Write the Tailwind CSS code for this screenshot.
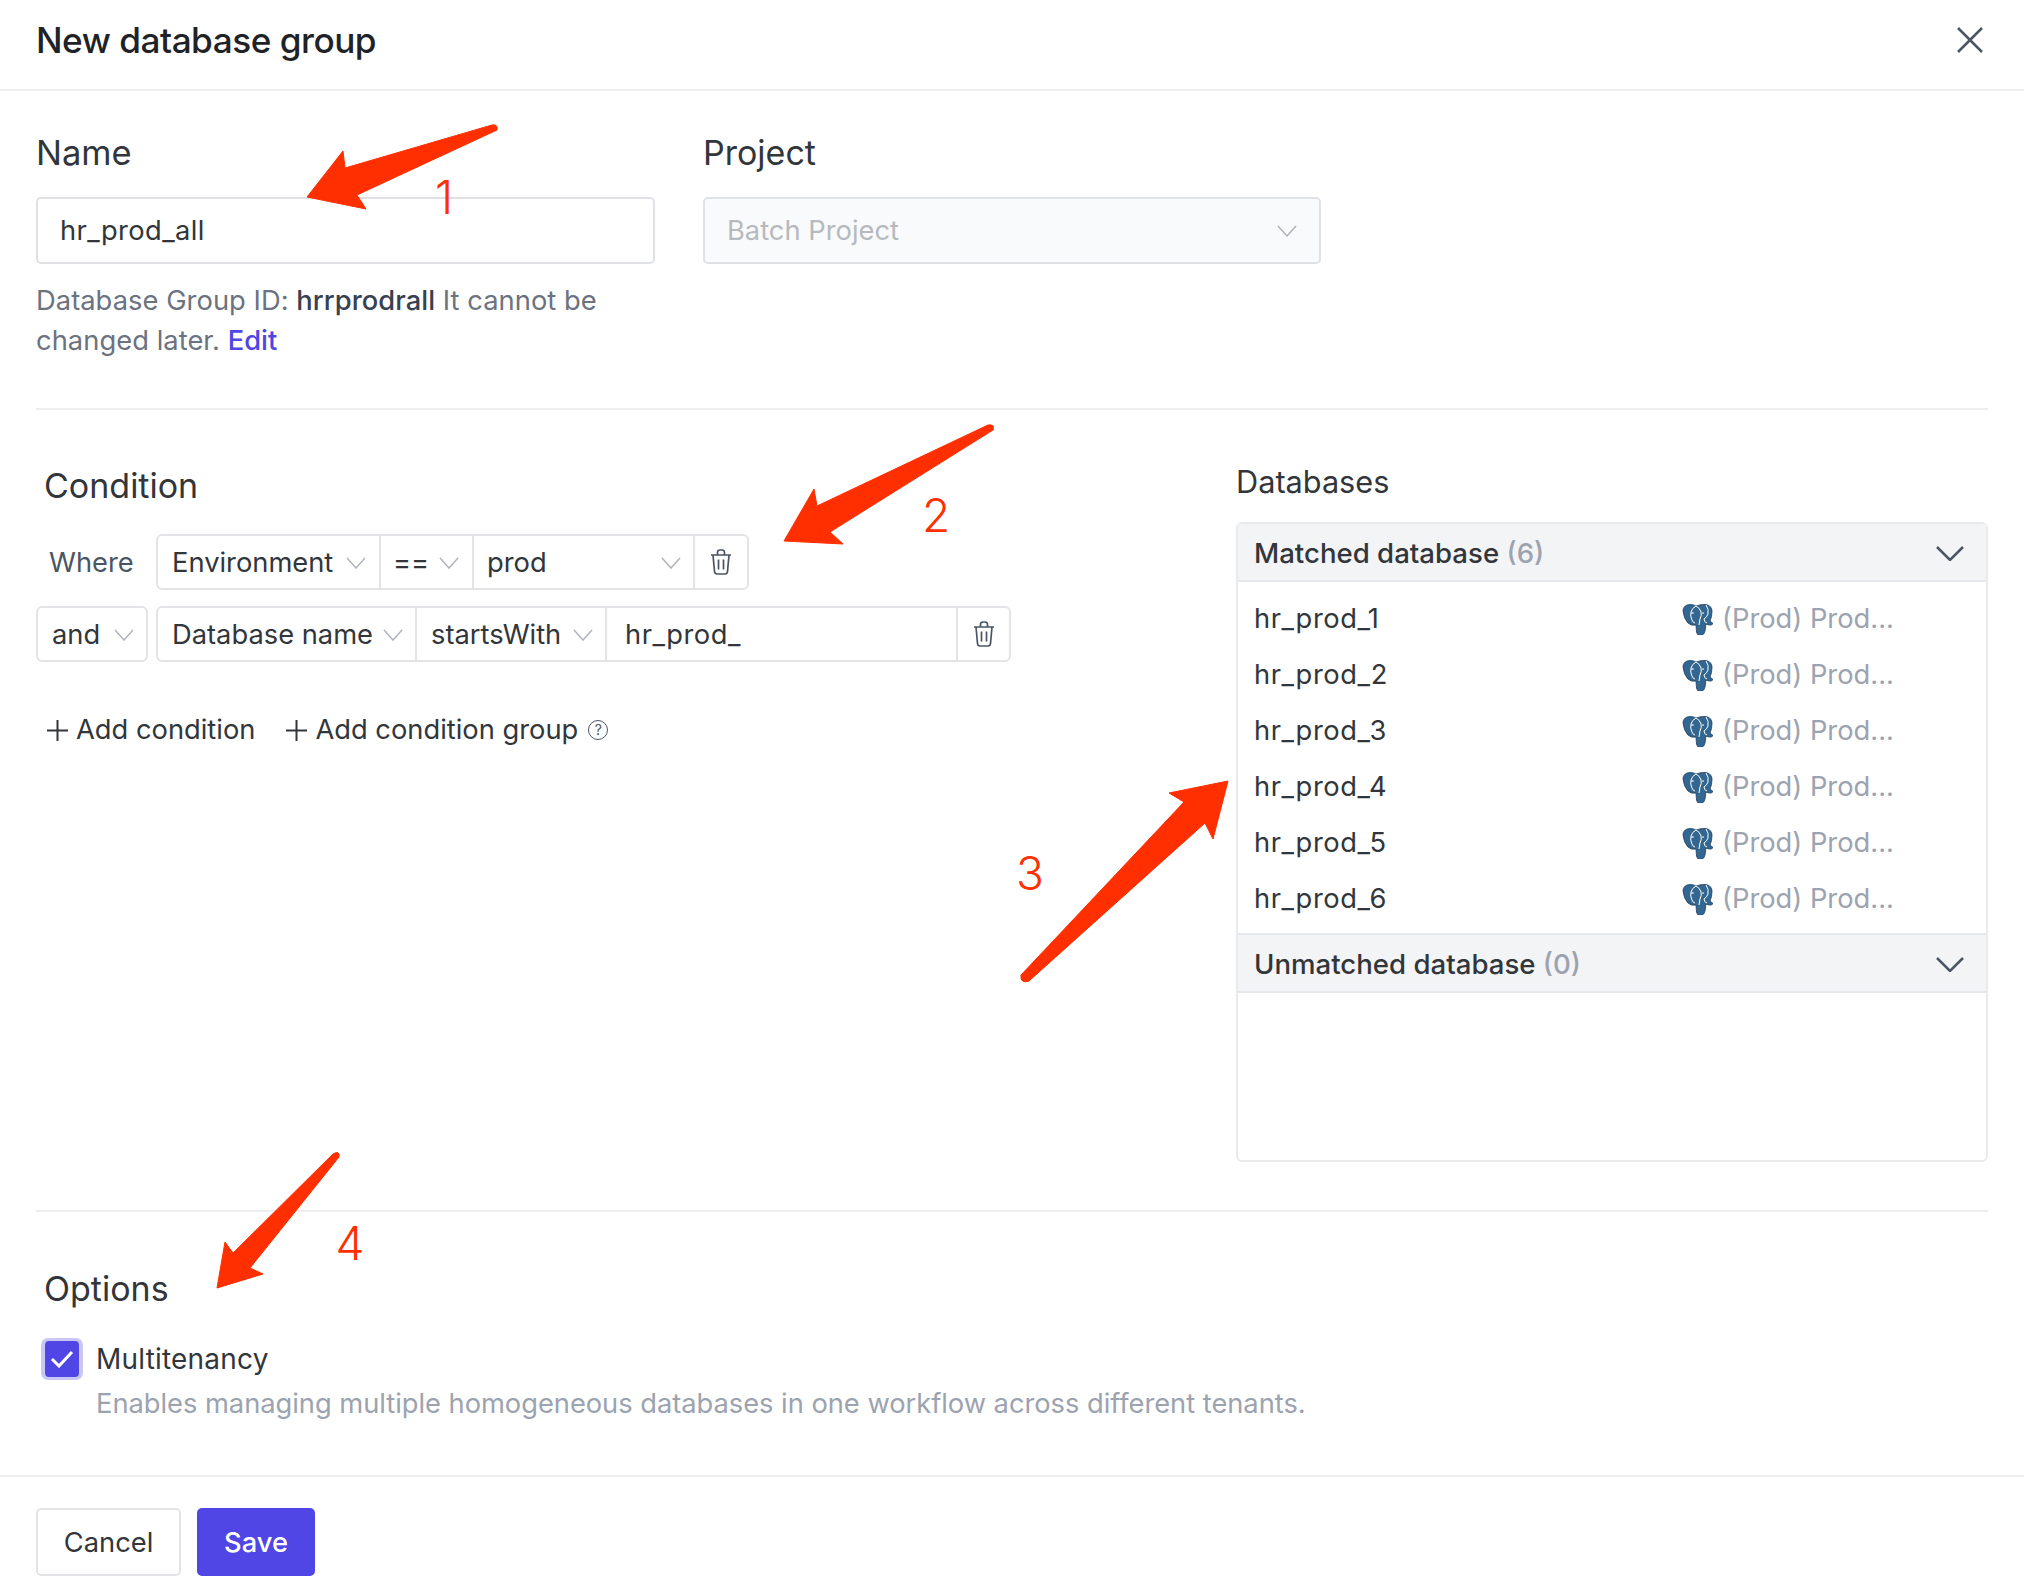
<!DOCTYPE html>
<html>
<head>
    <meta charset="UTF-8"/>
    <title>New database group</title>
    <script src="https://cdn.jsdelivr.net/npm/@tailwindcss/browser@4"></script>
</head>
<body class="bg-white">
<svg class="hidden">
    <symbol id="chev" viewBox="0 0 20 12"><path d="M1 1l9 10 9-10" fill="none" stroke="currentColor" stroke-width="1.5"/></symbol>
    <symbol id="trash" viewBox="0 0 22 26"><path d="M1 6h20M7.500 6V3.500Q7.500 1 10 1h2q2.500 0 2.500 2.500V6M3 6l1.500 16.500Q4.800 25 7 25h8q2.200 0 2.500-2.500L19 6M8.500 10.500v10M13.500 10.500v10" fill="none" stroke="currentColor" stroke-width="1.700"/></symbol>
    <symbol id="pg" viewBox="0 0 31 31">
        <path d="M1 7Q1 1 8 .5q4 0 6 1.500 5-2 10-1.500Q30 2 30 7q0 6-2 10l3 2.500q-1 2-4 1.500l-3-1-1 7q-.5 4-4.500 4.500-3.500 0-4-3.500L14 21q-5 1-8-2Q2 15 1 7z" fill="#336791" stroke="#1d3f5e" stroke-width=".8"/>
        <path d="M14 2q-4 2-5 6-1 4 1 8 1 3 3 3M14 2q4 2 5 6 1 3-1 7l-1 6M24 1q3 4 2 9-1 3-4 5 0 3 3 4M9 9h3M20 9h2" fill="none" stroke="#fff" stroke-width="1"/>
    </symbol>
</svg>

<div class="relative flex flex-col w-[2024px] h-[1594px] overflow-hidden bg-white text-[27.3px] leading-[40px] text-[#32363b] font-[family-name:Inter,sans-serif]">
    <!-- header -->
    <div class="flex items-center justify-between h-[91px] pb-[9px] pl-9 pr-[40px] border-b-2 border-[#eceef0]">
        <div class="text-[35.2px] font-medium text-[#1f2328] tracking-[-0.5px]">New database group</div>
        <svg class="w-[28px] h-[28px] text-[#4b5563]" viewBox="0 0 28 28"><path d="M2 2l24 24M26 2L2 26" fill="none" stroke="currentColor" stroke-width="2.500"/></svg>
    </div>

    <div class="flex-1 px-9">
        <!-- name and project -->
        <div class="pt-[38px] pb-[47px] border-b-2 border-[#eceef0]">
            <div class="flex gap-[48px]">
                <div class="w-[619px]">
                    <div class="text-[34.500px] leading-[48px] mb-[20px]">Name</div>
                    <div class="flex items-center h-[67px] px-[22px] border-2 border-[#dfe1e4] rounded-[5px] tracking-[0.4px]">hr_prod_all</div>
                    <div class="mt-[17px] text-[#6b7280] tracking-[0.05px]">Database Group ID: <span class="font-medium text-[#374151]">hrrprodrall</span> It cannot be changed later. <span class="font-medium text-[#4f46e5]">Edit</span></div>
                </div>
                <div class="w-[618px]">
                    <div class="text-[34px] leading-[48px] mb-[20px]">Project</div>
                    <div class="flex items-center justify-between h-[67px] px-[22px] border-2 border-[#dfe1e4] rounded-[5px] bg-[#f9fafb] text-[#b6b9bd]">
                        Batch Project
                        <svg class="w-[20px] h-[12px] text-[#b0b4ba]"><use href="#chev"/></svg>
                    </div>
                </div>
            </div>
        </div>

        <!-- condition and databases -->
        <div class="flex justify-between pt-[52px] pb-[48px] border-b-2 border-[#eceef0]">
            <div>
                <div class="text-[34px] leading-[48px] pl-2 mb-[24px]">Condition</div>
                <div class="flex items-center h-[56px]">
                    <div class="w-[120px] pl-[13px] pt-[2px] text-[#4b5563]">Where</div>
                    <div class="flex h-[56px] border-2 border-[#e2e4e7] rounded-[6px]">
                        <div class="flex items-center justify-between w-[221px] pl-[14px] pr-[13px] pt-[2px]">Environment<svg class="w-[20px] h-[12px] text-[#b0b4ba]"><use href="#chev"/></svg></div>
                        <div class="flex items-center justify-between w-[93px] pl-[12px] pr-[13px] pt-[2px] border-l-2 border-[#e2e4e7]">==<svg class="w-[20px] h-[12px] text-[#b0b4ba]"><use href="#chev"/></svg></div>
                        <div class="flex items-center justify-between w-[221px] pl-[13px] pr-[12px] pt-[2px] border-l-2 border-[#e2e4e7]">prod<svg class="w-[20px] h-[12px] text-[#b0b4ba]"><use href="#chev"/></svg></div>
                        <div class="flex items-center justify-center w-[54px] border-l-2 border-[#e2e4e7]"><svg class="w-[22px] h-[26px] text-[#4b5563]"><use href="#trash"/></svg></div>
                    </div>
                </div>
                <div class="flex items-center gap-2 mt-[16px]">
                    <div class="flex items-center justify-between w-[112px] h-[56px] pl-[14px] pr-[12px] pt-[2px] border-2 border-[#e2e4e7] rounded-[6px]">and<svg class="w-[20px] h-[12px] text-[#b0b4ba]"><use href="#chev"/></svg></div>
                    <div class="flex h-[56px] border-2 border-[#e2e4e7] rounded-[6px]">
                        <div class="flex items-center justify-between w-[257px] pl-[14px] pr-[12px] pt-[2px]">Database name<svg class="w-[20px] h-[12px] text-[#b0b4ba]"><use href="#chev"/></svg></div>
                        <div class="flex items-center justify-between w-[190px] pl-[14px] pr-[12px] pt-[2px] border-l-2 border-[#e2e4e7]">startsWith<svg class="w-[20px] h-[12px] text-[#b0b4ba]"><use href="#chev"/></svg></div>
                        <div class="flex items-center w-[351px] pl-[18px] pt-[2px] border-l-2 border-[#e2e4e7] tracking-[0.5px]">hr_prod_</div>
                        <div class="flex items-center justify-center w-[53px] border-l-2 border-[#e2e4e7]"><svg class="w-[22px] h-[26px] text-[#4b5563]"><use href="#trash"/></svg></div>
                    </div>
                </div>
                <div class="flex items-center mt-[48px] pl-[11px]">
                    <svg class="w-[21px] h-[21px] mr-[8px]" viewBox="0 0 21 21"><path d="M0 10.500h21M10.500 0v21" stroke="#32363b" stroke-width="2"/></svg>
                    <span>Add condition</span>
                    <svg class="w-[21px] h-[21px] ml-[31px] mr-[8px]" viewBox="0 0 21 21"><path d="M0 10.500h21M10.500 0v21" stroke="#32363b" stroke-width="2"/></svg>
                    <span>Add condition group</span>
                    <span class="flex items-center justify-center w-[20px] h-[20px] ml-[10px] rounded-full border-[1.5px] border-[#4b5563] text-[14px] leading-none text-[#4b5563]">?</span>
                </div>
            </div>

            <div class="w-[752px]">
                <div class="text-[30.700px] leading-[44px] mb-[18px] mt-[-2px]">Databases</div>
                <div class="flex flex-col h-[640px] border-2 border-[#e8eaec] rounded-[6px]">
                    <div class="flex items-center justify-between h-[58px] shrink-0 pl-[16px] pr-[22px] pt-[2px] bg-[#f3f4f6] border-b-2 border-[#e5e7eb] font-medium text-[27.6px]">
                        <div>Matched database <span class="text-[#9ca3af]">(6)</span></div>
                        <svg class="w-[28px] h-[15px] text-[#4b5563]" viewBox="0 0 28 15"><path d="M1 1l13 13L27 1" fill="none" stroke="currentColor" stroke-width="2.500"/></svg>
                    </div>
                    <div class="grid grid-cols-[428px_1fr] auto-rows-[56px] items-center pl-[16px] pt-[9px] pb-[6px] h-[351px] shrink-0">
                        <div class="tracking-[0.6px]">hr_prod_1</div><div class="flex items-center gap-[9px] text-[#9ca3af]"><svg class="w-[31px] h-[31px]"><use href="#pg"/></svg>(Prod) Prod...</div>
                        <div class="tracking-[0.6px]">hr_prod_2</div><div class="flex items-center gap-[9px] text-[#9ca3af]"><svg class="w-[31px] h-[31px]"><use href="#pg"/></svg>(Prod) Prod...</div>
                        <div class="tracking-[0.6px]">hr_prod_3</div><div class="flex items-center gap-[9px] text-[#9ca3af]"><svg class="w-[31px] h-[31px]"><use href="#pg"/></svg>(Prod) Prod...</div>
                        <div class="tracking-[0.6px]">hr_prod_4</div><div class="flex items-center gap-[9px] text-[#9ca3af]"><svg class="w-[31px] h-[31px]"><use href="#pg"/></svg>(Prod) Prod...</div>
                        <div class="tracking-[0.6px]">hr_prod_5</div><div class="flex items-center gap-[9px] text-[#9ca3af]"><svg class="w-[31px] h-[31px]"><use href="#pg"/></svg>(Prod) Prod...</div>
                        <div class="tracking-[0.6px]">hr_prod_6</div><div class="flex items-center gap-[9px] text-[#9ca3af]"><svg class="w-[31px] h-[31px]"><use href="#pg"/></svg>(Prod) Prod...</div>
                    </div>
                    <div class="flex items-center justify-between h-[60px] shrink-0 pl-[16px] pr-[22px] pt-[2px] bg-[#f3f4f6] border-y-2 border-[#e5e7eb] font-medium text-[27.6px]">
                        <div>Unmatched database <span class="text-[#9ca3af]">(0)</span></div>
                        <svg class="w-[28px] h-[15px] text-[#4b5563]" viewBox="0 0 28 15"><path d="M1 1l13 13L27 1" fill="none" stroke="currentColor" stroke-width="2.500"/></svg>
                    </div>
                </div>
            </div>
        </div>

        <!-- options -->
        <div class="pt-[53px]">
            <div class="text-[34px] leading-[48px] pl-2">Options</div>
            <div class="flex items-center mt-[24px] ml-[5px] h-[44px]">
                <div class="flex items-center justify-center w-[42px] h-[42px] rounded-[7px] border-[4px] border-[#c9c7f5]">
                    <div class="flex items-center justify-center w-[36px] h-[36px] rounded-[4px] bg-[#4f46e5]">
                        <svg class="w-[24px] h-[18px]" viewBox="0 0 24 18"><path d="M2 9l7 7L22 2" fill="none" stroke="#fff" stroke-width="3"/></svg>
                    </div>
                </div>
                <div class="ml-[13px] text-[28px] tracking-[0.2px]">Multitenancy</div>
            </div>
            <div class="mt-[3px] ml-[60px] text-[#9ca3af] tracking-[-0.03px]">Enables managing multiple homogeneous databases in one workflow across different tenants.</div>
        </div>
    </div>

    <!-- footer -->
    <div class="flex gap-[16px] h-[119px] px-9 pt-[31px] border-t-2 border-[#eceef0]">
        <div class="flex items-center justify-center w-[145px] h-[68px] pt-[1px] border-2 border-[#e2e4e7] rounded-[5px]">Cancel</div>
        <div class="flex items-center justify-center w-[118px] h-[68px] pt-[1px] rounded-[5px] bg-[#4f46e5] font-medium text-white">Save</div>
    </div>

    <!-- red annotations over the screenshot -->
    <svg class="absolute left-0 top-0 w-[2024px] h-[1594px] pointer-events-none" viewBox="0 0 2024 1594">
        <g fill="#ff2f00" stroke="#ff2f00" stroke-width="1" stroke-linejoin="round">
            <path d="M307 197L343 151L345 168L492 125Q498 124 497 130L357 195L366 209Z"/>
            <path d="M784 541L814 489L817 506L988 425Q995 424 993 430L830 532L843 544Z"/>
            <path d="M1228 781L1169 793L1184 802L1021 975Q1020 984 1029 981L1205 823L1213 839Z"/>
            <path d="M217 1288L225 1242L233 1253L333 1154Q340 1150 339 1157L250 1268L263 1274Z"/>
        </g>
        <g fill="#ff2f00" font-family="Inter, sans-serif" font-weight="300" font-size="46" text-anchor="middle">
            <text x="444" y="214">1</text>
            <text x="936" y="532">2</text>
            <text x="1030" y="890">3</text>
            <text x="350" y="1260">4</text>
        </g>
    </svg>
</div>
</body>
</html>
